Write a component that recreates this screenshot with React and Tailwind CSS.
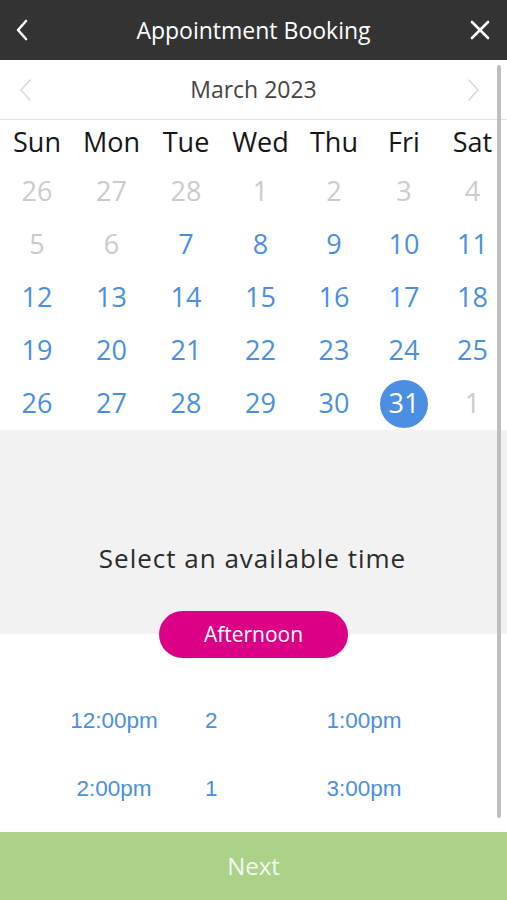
import React from 'react';

const weekdays = ['Sun', 'Mon', 'Tue', 'Wed', 'Thu', 'Fri', 'Sat'];

const weeks = [
    [[26, 0], [27, 0], [28, 0], [1, 0], [2, 0], [3, 0], [4, 0]],
    [[5, 0], [6, 0], [7, 1], [8, 1], [9, 1], [10, 1], [11, 1]],
    [[12, 1], [13, 1], [14, 1], [15, 1], [16, 1], [17, 1], [18, 1]],
    [[19, 1], [20, 1], [21, 1], [22, 1], [23, 1], [24, 1], [25, 1]],
    [[26, 1], [27, 1], [28, 1], [29, 1], [30, 1], [31, 2], [1, 0]],
];

const slots = [
    { left: '12:00pm', count: '2', right: '1:00pm' },
    { left: '2:00pm', count: '1', right: '3:00pm' },
];

const cols = 'grid grid-cols-[74px_75px_74px_75px_72px_68px_69px]';

function DayCell({ day, state }) {
    if (state === 2) {
        return (
            <div className="flex items-center justify-center">
                <div className="w-[48px] h-[48px] rounded-full bg-[#4a8fe1] text-white flex items-center justify-center">
                    {day}
                </div>
            </div>
        );
    }
    return (
        <div className={`flex items-center justify-center ${state ? 'text-[#4a8fdf]' : 'text-[#cbcbcb]'}`}>
            {day}
        </div>
    );
}

export default function App() {
    return (
        <div className="relative w-[507px] h-[900px] flex flex-col bg-white overflow-hidden font-['Open_Sans',sans-serif]">
            <header className="h-[60px] bg-[#333333] grid grid-cols-[1fr_auto_1fr] items-center px-[14px] shrink-0">
                <svg width="16" height="24" viewBox="0 0 16 24" fill="none">
                    <path d="M12 3 L4 12 L12 21" stroke="#fff" strokeWidth="2.6" strokeLinecap="round" strokeLinejoin="round" />
                </svg>
                <h1 className="text-[23px] text-white">Appointment Booking</h1>
                <svg width="22" height="22" viewBox="0 0 22 22" fill="none" className="justify-self-end mr-[2px]">
                    <path d="M3 3 L19 19 M19 3 L3 19" stroke="#fff" strokeWidth="2.6" strokeLinecap="round" />
                </svg>
            </header>

            <div className="h-[60px] border-b border-[#e2e2e2] grid grid-cols-[1fr_auto_1fr] items-center px-[18px] shrink-0">
                <svg width="16" height="24" viewBox="0 0 16 24" fill="none">
                    <path d="M12 2 L3 12 L12 22" stroke="#dadada" strokeWidth="1.6" strokeLinecap="round" strokeLinejoin="round" />
                </svg>
                <span className="text-[23px] text-[#454545]">March 2023</span>
                <svg width="16" height="24" viewBox="0 0 16 24" fill="none" className="justify-self-end mr-[8px]">
                    <path d="M4 2 L13 12 L4 22" stroke="#dadada" strokeWidth="1.6" strokeLinecap="round" strokeLinejoin="round" />
                </svg>
            </div>

            <div className={`${cols} h-[45px] text-[27px] text-[#161616] shrink-0`}>
                {weekdays.map((d) => (
                    <div key={d} className="flex items-center justify-center">{d}</div>
                ))}
            </div>

            {weeks.map((week, i) => (
                <div key={i} className={`${cols} h-[53px] text-[27px] shrink-0`}>
                    {week.map(([day, state], j) => (
                        <DayCell key={j} day={day} state={state} />
                    ))}
                </div>
            ))}

            <div className="h-[204px] bg-[#f2f2f2] shrink-0 pt-[111px]">
                <p className="text-center text-[26px] leading-[34px] text-[#2b2b2b] tracking-[1px] pr-[2px]">
                    Select an available time
                </p>
            </div>

            <div className="relative z-10 -mt-[23px] flex justify-center shrink-0">
                <button className="w-[189px] h-[47px] rounded-full bg-[#dc0087] text-white text-[21px] flex items-center justify-center">
                    Afternoon
                </button>
            </div>

            <div className="flex-1 pt-[29px] font-['Liberation_Sans',Arial,sans-serif] text-[22.5px] text-[#4a8fdf]">
                {slots.map((s) => (
                    <div key={s.left} className="h-[68px] flex items-center pl-[28px]">
                        <span className="w-[172px] text-center">{s.left}</span>
                        <span className="w-[64px] pl-[5px]">{s.count}</span>
                        <span className="w-[200px] text-center">{s.right}</span>
                    </div>
                ))}
            </div>

            <button className="h-[68px] bg-[#acd189] text-[#f4f9ef] text-[24px] flex items-center justify-center shrink-0">
                Next
            </button>

            <div className="absolute left-[497px] top-[65px] w-[4px] h-[753px] rounded-full bg-[#bfbfbf]"></div>
        </div>
    );
}
